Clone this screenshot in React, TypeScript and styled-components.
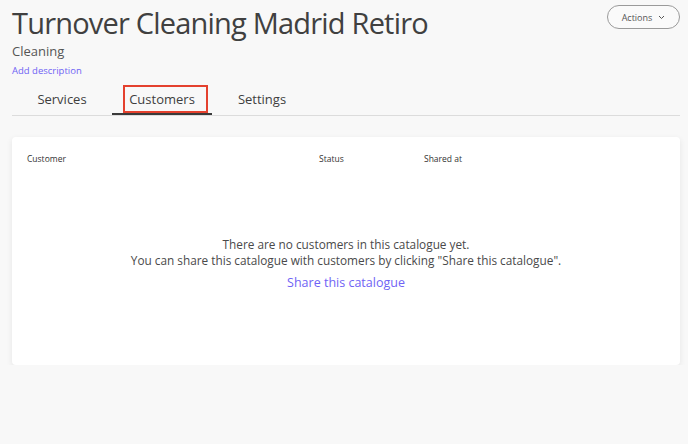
import styled, { createGlobalStyle } from "styled-components";

const GlobalStyle = createGlobalStyle`
  body {
    margin: 0;
    background: #f8f8f8;
    font-family: "Open Sans", "Noto Sans", sans-serif;
    color: #444;
  }
`;

const Page = styled.div`
  padding: 0 8px 0 12px;
`;

const Header = styled.header`
  display: flex;
  justify-content: space-between;
  align-items: flex-start;
`;

const Title = styled.h1`
  margin: 0;
  padding-top: 4px;
  font-size: 29px;
  line-height: 38px;
  font-weight: 400;
  letter-spacing: -0.8px;
  color: #404040;
`;

const Subtitle = styled.div`
  font-size: 13px;
  line-height: 18px;
  color: #555;
`;

const AddLink = styled.a`
  display: block;
  font-size: 9.5px;
  line-height: 14px;
  margin-top: 4px;
  color: #6f63f5;
  cursor: pointer;
`;

const ActionsButton = styled.button`
  margin-top: 5px;
  height: 24px;
  width: 73px;
  border: 1px solid #9a9a9a;
  border-radius: 12px;
  background: #fafafa;
  font-family: inherit;
  font-size: 9px;
  color: #555;
  display: flex;
  align-items: center;
  justify-content: center;
  gap: 6px;
  padding: 0;
`;

const TabBar = styled.nav`
  display: flex;
  margin-top: 6px;
  border-bottom: 1px solid #dcdcdc;
`;

const Tab = styled.div<{ $active?: boolean }>`
  position: relative;
  width: 100px;
  height: 31px;
  display: flex;
  align-items: center;
  justify-content: center;
  font-size: 13px;
  color: #3e3e3e;
  box-sizing: border-box;
  border-bottom: 2px solid ${(p) => (p.$active ? "#3a3a3a" : "transparent")};
`;

const Highlight = styled.span`
  position: absolute;
  left: 11px;
  right: 4px;
  top: 1px;
  bottom: 0;
  border: 2px solid #e4412e;
  pointer-events: none;
`;

const Card = styled.section`
  margin-top: 21px;
  height: 228px;
  background: #fff;
  border-radius: 4px;
  box-shadow: 0 2px 6px rgba(0, 0, 0, 0.08);
  display: flex;
  flex-direction: column;
`;

const TableHead = styled.div`
  display: grid;
  grid-template-columns: 292px 105px 1fr;
  padding: 16px 15px 0;
  font-size: 8.5px;
  line-height: 12px;
  color: #333;
`;

const Empty = styled.div`
  margin-top: 71px;
  text-align: center;
  font-size: 11.8px;
  line-height: 16px;
  color: #4a4a4a;
`;

const ShareLink = styled.a`
  display: block;
  margin-top: 7px;
  font-size: 12.5px;
  line-height: 16px;
  color: #6f63f5;
  cursor: pointer;
`;

const Chevron = () => (
  <svg width="7" height="5" viewBox="0 0 7 5" fill="none">
    <path d="M1 1l2.5 2.5L6 1" stroke="#555" strokeWidth="1" />
  </svg>
);

export default function App() {
  return (
    <Page>
      <GlobalStyle />
      <Header>
        <div>
          <Title>Turnover Cleaning Madrid Retiro</Title>
          <Subtitle>Cleaning</Subtitle>
          <AddLink>Add description</AddLink>
        </div>
        <ActionsButton>
          Actions <Chevron />
        </ActionsButton>
      </Header>
      <TabBar>
        <Tab>Services</Tab>
        <Tab $active>
          Customers
          <Highlight />
        </Tab>
        <Tab>Settings</Tab>
      </TabBar>
      <Card>
        <TableHead>
          <span>Customer</span>
          <span>Status</span>
          <span>Shared at</span>
        </TableHead>
        <Empty>
          There are no customers in this catalogue yet.
          <br />
          You can share this catalogue with customers by clicking "Share this catalogue".
          <ShareLink>Share this catalogue</ShareLink>
        </Empty>
      </Card>
    </Page>
  );
}
